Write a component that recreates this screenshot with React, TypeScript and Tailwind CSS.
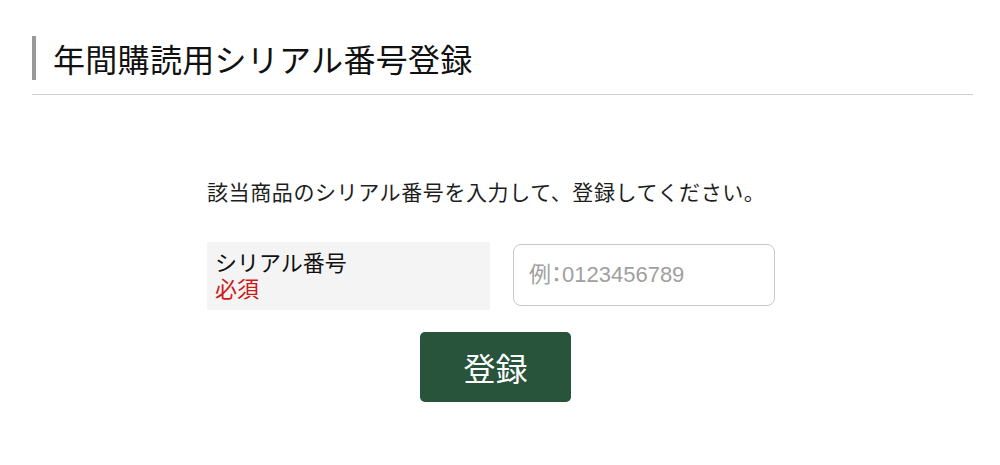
export default function App() {
    const font = { fontFamily: '"Noto Sans CJK JP", "Noto Sans", sans-serif' };
    const inputFont = {
        fontFamily: '"Liberation Sans", "Noto Sans CJK JP", sans-serif',
        fontFeatureSettings: '"palt"',
    };

    return (
        <div className="w-[1000px] h-[465px] bg-white text-[#1e1e1e]" style={font}>
            <div className="pl-8 pr-[27px] pt-9">
                <div className="flex items-center h-[44px] border-l-4 border-[#9a9a9a] pl-[17px]">
                    <h1 className="text-[32px] leading-none tracking-[0.3px] text-[#111]">年間購読用シリアル番号登録</h1>
                </div>
                <div className="mt-[14px] border-b border-[#cfcfcf]"></div>
            </div>

            <div className="pl-[207px] pt-[81px]">
                <p className="text-[21px] leading-[30px] tracking-[0.6px]">該当商品のシリアル番号を入力して、登録してください。</p>

                <div className="flex items-start mt-[36px]">
                    <div className="w-[283px] h-[68px] bg-[#f4f4f4] px-2 pt-[6px]">
                        <div className="text-[22px] leading-[26px] text-[#111]">シリアル番号</div>
                        <div className="text-[22px] leading-[26px] text-[#cc1a1a]">必須</div>
                    </div>
                    <input
                        type="text"
                        placeholder="例：0123456789"
                        className="ml-[23px] mt-[2px] w-[262px] h-[62px] rounded-lg border border-[#c8c8c8] px-[15px] text-[22px] placeholder:text-[#a0a0a0] outline-none"
                        style={inputFont}
                    />
                </div>

                <div className="mt-[22px] ml-[213px]">
                    <button className="w-[151px] h-[70px] rounded-[5px] bg-[#27543a] text-white text-[32px] leading-none">
                        登録
                    </button>
                </div>
            </div>
        </div>
    );
}
